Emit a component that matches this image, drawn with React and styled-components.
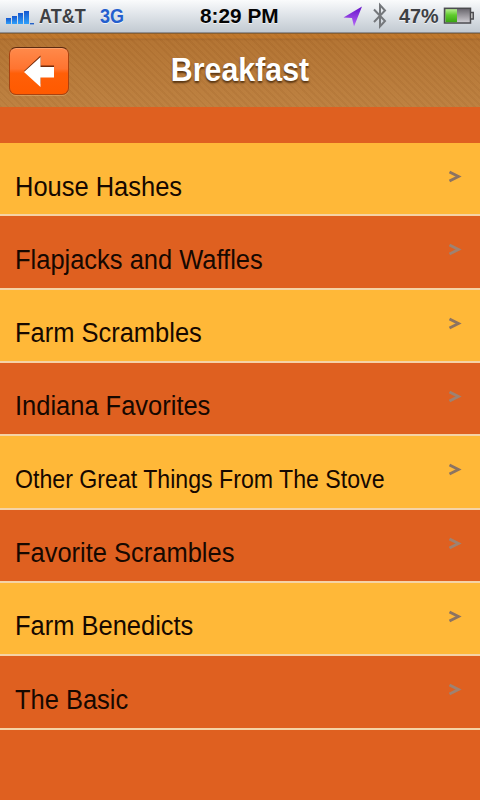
import styled, { createGlobalStyle } from 'styled-components';

const GlobalStyle = createGlobalStyle`
  * {
    box-sizing: border-box;
  }

  body {
    margin: 0;
    background: #df6020;
    font-family: "Liberation Sans", Arial, sans-serif;
  }
`;

const Screen = styled.main`
  display: flex;
  flex-direction: column;
  width: 480px;
  height: 800px;
  overflow: hidden;
  background: #df6020;
`;

const StatusBar = styled.div`
  display: grid;
  grid-template-columns: 1fr auto 1fr;
  align-items: center;
  height: 33px;
  padding: 0 5px 0 6px;
  background: linear-gradient(#fafbfc 0, #dfe4e9 45%, #c3cbd2 96%, #8e8e92 97%);
`;

const StatusGroup = styled.div`
  display: flex;
  align-items: center;
  justify-content: ${({ $end }) => ($end ? 'flex-end' : 'flex-start')};
  height: 33px;
`;

const StatusText = styled.span`
  width: ${({ $width }) => $width}px;
  margin-left: ${({ $gap = 0 }) => $gap}px;
  font-size: 20px;
  font-weight: 700;
  line-height: 33px;
  white-space: nowrap;
  color: ${({ $color }) => $color};
  text-shadow: 0 1px 0 rgba(255, 255, 255, 0.7);
  transform: scaleX(${({ $scale = 0.9 }) => $scale});
  transform-origin: left;
`;

const Header = styled.header`
  display: grid;
  grid-template-columns: 78px 1fr 78px;
  flex: none;
  height: 74px;
  border-top: 1px solid #8a602f;
  background:
    repeating-linear-gradient(45deg, rgba(90, 50, 10, 0.05) 0 2px, rgba(255, 220, 160, 0.02) 2px 5px),
    linear-gradient(#be762b 0, #be762b 4px, #a86a2b 5px, #b37332 7px, #bd8040 100%);
`;

const BackButton = styled.button`
  display: flex;
  align-items: center;
  justify-content: center;
  width: 60px;
  height: 48px;
  margin: 13px 0 0 9px;
  padding: 0;
  border: 1px solid #a94210;
  border-top-color: #5c2a10;
  border-radius: 7px;
  background: linear-gradient(#ff8a4b 0, #ff7430 45%, #ff5f08 55%, #ff5a00 100%);
  box-shadow: 0 1px 0 rgba(255, 210, 150, 0.35), inset 0 1px 0 rgba(255, 170, 120, 0.7);
`;

const Title = styled.h1`
  margin: 0;
  font-size: 33px;
  font-weight: 700;
  line-height: 71px;
  text-align: center;
  color: #fff;
  text-shadow: 0 2px 2px rgba(50, 25, 0, 0.7);
  transform: scaleX(0.92);
`;

const Menu = styled.ul`
  margin: 36px 0 0;
  padding: 0;
  list-style: none;
`;

const MenuRow = styled.li`
  display: flex;
  justify-content: space-between;
  height: 73.33px;
  padding: 0 18px 0 15px;
  border-bottom: 2px solid #f5d3a6;
  background: #df6020;
  color: #9e8272;

  &:nth-child(odd) {
    background: #ffb838;
    color: #8c7462;
  }
`;

const Label = styled.span`
  padding-top: 26.5px;
  font-size: ${({ $small }) => ($small ? 26 : 28.4)}px;
  line-height: 33px;
  white-space: nowrap;
  color: #160800;
  transform: scaleX(${({ $small }) => ($small ? 0.89 : 0.897)});
  transform-origin: left;
`;

const Chevron = styled.svg`
  flex: none;
  width: 14px;
  height: 13px;
  margin-top: 27px;
`;

const items = [
  { name: 'House Hashes' },
  { name: 'Flapjacks and Waffles' },
  { name: 'Farm Scrambles' },
  { name: 'Indiana Favorites' },
  { name: 'Other Great Things From The Stove', small: true },
  { name: 'Favorite Scrambles' },
  { name: 'Farm Benedicts' },
  { name: 'The Basic' },
];

const SignalIcon = () => (
  <svg width="29" height="33" viewBox="0 0 29 33">
    <defs>
      <linearGradient id="signal" x1="0" y1="0" x2="0" y2="1">
        <stop offset="0" stopColor="#1557cf" />
        <stop offset="1" stopColor="#2fa0fa" />
      </linearGradient>
    </defs>
    <g fill="url(#signal)">
      <rect x="0" y="18" width="5" height="6" />
      <rect x="6" y="16" width="5" height="8" />
      <rect x="12" y="13" width="5" height="11" />
      <rect x="18" y="11" width="5" height="13" />
    </g>
    <rect x="24" y="23" width="4" height="1.4" fill="#2462c8" />
  </svg>
);

const LocationIcon = () => (
  <svg width="20" height="33" viewBox="0 0 20 33">
    <defs>
      <linearGradient id="location" x1="0" y1="0" x2="0" y2="1">
        <stop offset="0" stopColor="#6410c8" />
        <stop offset="1" stopColor="#b768f8" />
      </linearGradient>
    </defs>
    <path d="M19 6.5L.5 17.5L9 18L11 26.5Z" fill="url(#location)" />
  </svg>
);

const BluetoothIcon = styled.svg`
  margin-left: 10px;
`;

const Bluetooth = () => (
  <BluetoothIcon width="14" height="33" viewBox="0 0 14 33">
    <path
      d="M1 9.5L12 21L7 26.5V5L12 10.5L1 22"
      fill="none"
      stroke="#74777b"
      strokeWidth="2"
    />
  </BluetoothIcon>
);

const BatteryIcon = () => (
  <svg width="32" height="33" viewBox="0 0 32 33">
    <defs>
      <linearGradient id="empty" x1="0" y1="0" x2="0" y2="1">
        <stop offset="0" stopColor="#66636a" />
        <stop offset="1" stopColor="#d2d0d5" />
      </linearGradient>
      <linearGradient id="charge" x1="0" y1="0" x2="0" y2="1">
        <stop offset="0" stopColor="#b5ef8d" />
        <stop offset="0.45" stopColor="#5fcb2d" />
        <stop offset="1" stopColor="#39a512" />
      </linearGradient>
    </defs>
    <rect x="1.5" y="8.3" width="26" height="14.7" fill="url(#empty)" stroke="#4b4b4f" strokeWidth="1.5" />
    <rect x="2.5" y="9.2" width="11.5" height="13" fill="url(#charge)" />
    <path d="M28 12.5H30.3V19H28" fill="#bbb" stroke="#4b4b4f" strokeWidth="1.3" />
  </svg>
);

const ArrowIcon = () => (
  <svg width="34" height="34" viewBox="0 0 34 34">
    <path d="M2 17L18.5 1.5V11.5H32V21H18.5V30Z" fill="#742b0a" />
    <path d="M2 18L18.5 3V13H32V23.5H18.5V33Z" fill="#fff" />
  </svg>
);

const App = () => {
  return (
    <>
      <GlobalStyle />
      <Screen>
        <StatusBar>
          <StatusGroup>
            <SignalIcon />
            <StatusText $gap={4} $width={61} $color="#3d4044">AT&amp;T</StatusText>
            <StatusText $width={27} $color="#245fce">3G</StatusText>
          </StatusGroup>
          <StatusText $width={81} $color="#050505" $scale={1.04}>8:29 PM</StatusText>
          <StatusGroup $end>
            <LocationIcon />
            <Bluetooth />
            <StatusText $gap={12} $width={44} $color="#3d4044" $scale={0.99}>47%</StatusText>
            <BatteryIcon />
          </StatusGroup>
        </StatusBar>
        <Header>
          <BackButton aria-label="Back">
            <ArrowIcon />
          </BackButton>
          <Title>Breakfast</Title>
        </Header>
        <Menu>
          {items.map(({ name, small }) => (
            <MenuRow key={name}>
              <Label $small={small}>{name}</Label>
              <Chevron viewBox="0 0 14 13">
                <path d="M1.5 2L10.5 6.5L1.5 11" fill="none" stroke="currentColor" strokeWidth="2.8" />
              </Chevron>
            </MenuRow>
          ))}
        </Menu>
      </Screen>
    </>
  );
};

export default App;
